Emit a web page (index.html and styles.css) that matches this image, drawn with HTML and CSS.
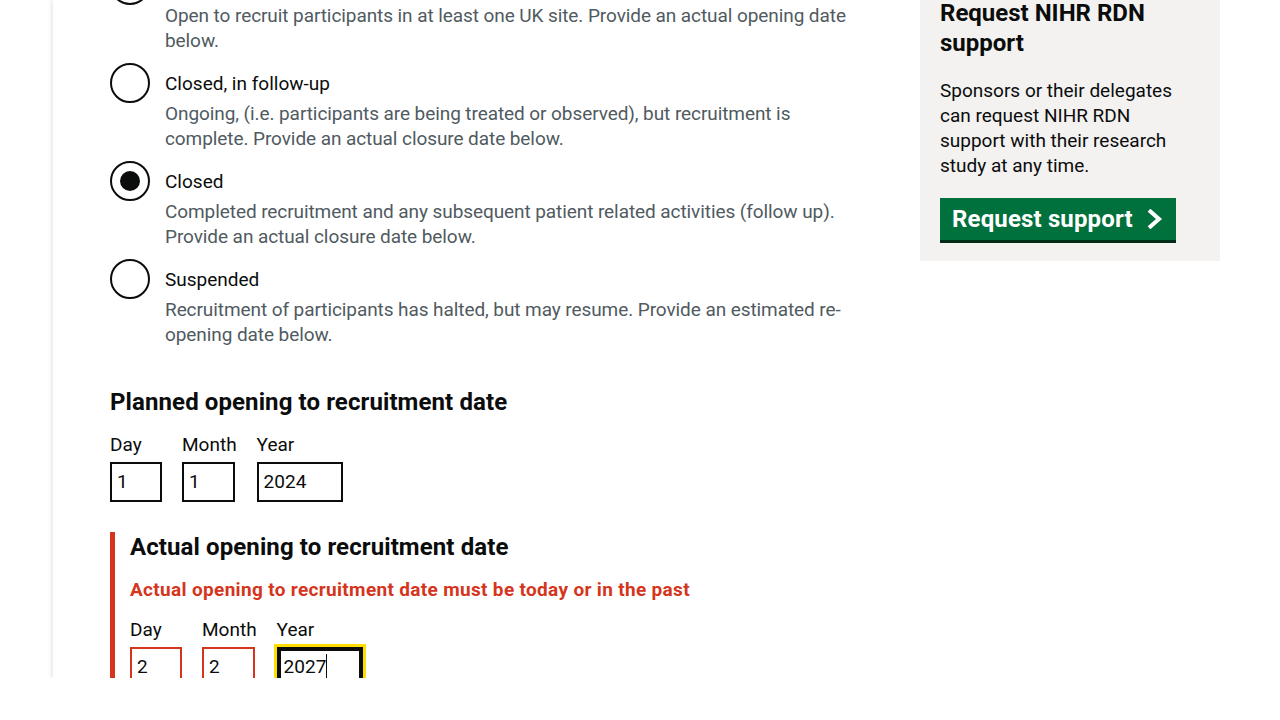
FILE: index.html
```html
<!DOCTYPE html>
<html lang="en">
<head>
<meta charset="utf-8">
<title>Update study status</title>
<link rel="stylesheet" href="styles.css">
</head>
<body>
<div class="frame">
  <div class="layout">
    <main class="main">
      <div class="radios">
        <div class="radio-item">
          <span class="radio"></span>
          <div class="radio-text">
            <div class="radio-label">Open, to recruitment</div>
            <div class="hint">Open to recruit participants in at least one UK site. Provide an actual opening date below.</div>
          </div>
        </div>
        <div class="radio-item">
          <span class="radio"></span>
          <div class="radio-text">
            <div class="radio-label">Closed, in follow-up</div>
            <div class="hint">Ongoing, (i.e. participants are being treated or observed), but recruitment is complete. Provide an actual closure date below.</div>
          </div>
        </div>
        <div class="radio-item">
          <span class="radio radio-checked"></span>
          <div class="radio-text">
            <div class="radio-label">Closed</div>
            <div class="hint">Completed recruitment and any subsequent patient related activities (follow up). Provide an actual closure date below.</div>
          </div>
        </div>
        <div class="radio-item">
          <span class="radio"></span>
          <div class="radio-text">
            <div class="radio-label">Suspended</div>
            <div class="hint">Recruitment of participants has halted, but may resume. Provide an estimated re-opening date below.</div>
          </div>
        </div>
      </div>

      <section class="date-group">
        <h2 class="group-heading">Planned opening to recruitment date</h2>
        <div class="date-inputs">
          <div class="date-item">
            <div class="date-label">Day</div>
            <div class="input input-day">1</div>
          </div>
          <div class="date-item">
            <div class="date-label">Month</div>
            <div class="input input-month">1</div>
          </div>
          <div class="date-item">
            <div class="date-label">Year</div>
            <div class="input input-year">2024</div>
          </div>
        </div>
      </section>

      <section class="date-group date-group-error">
        <h2 class="group-heading">Actual opening to recruitment date</h2>
        <p class="error-message">Actual opening to recruitment date must be today or in the past</p>
        <div class="date-inputs">
          <div class="date-item">
            <div class="date-label">Day</div>
            <div class="input input-day input-error">2</div>
          </div>
          <div class="date-item">
            <div class="date-label">Month</div>
            <div class="input input-month input-error">2</div>
          </div>
          <div class="date-item">
            <div class="date-label">Year</div>
            <div class="input input-year input-focus">2027<span class="caret"></span></div>
          </div>
        </div>
      </section>
    </main>

    <aside class="sidebar">
      <h2 class="sidebar-heading">Request NIHR RDN support</h2>
      <p class="sidebar-text">Sponsors or their delegates can request NIHR RDN support with their research study at any time.</p>
      <a class="button" href="#">Request support
        <svg class="chevron" width="16" height="20" viewBox="0 0 16 20" aria-hidden="true"><polyline points="3.5,2.5 12,10 3.5,17.5" fill="none" stroke="#ffffff" stroke-width="4" stroke-linecap="square" stroke-linejoin="miter"/></svg>
      </a>
    </aside>
  </div>
</div>
</body>
</html>
```

FILE: styles.css
```css
* { box-sizing: border-box; }

html, body {
  margin: 0;
  padding: 0;
  background: #ffffff;
}

body {
  font-family: Roboto, "Noto Sans", Arial, sans-serif;
  color: #0b0c0c;
  font-size: 19px;
  line-height: 25px;
}

.frame {
  margin-left: 53px;
  height: 678px;
  overflow: hidden;
  background: #ffffff;
  box-shadow: -1px 0 5px rgba(0, 0, 0, 0.12);
  padding-left: 57px;
}

.layout {
  margin-top: -35px;
  display: grid;
  grid-template-columns: 750px 300px;
  column-gap: 60px;
  align-items: start;
}

/* Radios */
.radios {
  margin-bottom: 40px;
}

.radio-item {
  display: flex;
  margin-bottom: 10px;
}

.radio-item:last-child {
  margin-bottom: 0;
}

.radio {
  flex: 0 0 40px;
  width: 40px;
  height: 40px;
  border: 2px solid #0b0c0c;
  border-radius: 50%;
  display: flex;
  align-items: center;
  justify-content: center;
  background: #ffffff;
}

.radio-checked::after {
  content: "";
  width: 20px;
  height: 20px;
  border-radius: 50%;
  background: #0b0c0c;
}

.radio-text {
  padding-left: 15px;
}

.radio-label {
  padding-top: 8px;
  padding-bottom: 5px;
  font-size: 19px;
  line-height: 25px;
  color: #0b0c0c;
}

.hint {
  font-size: 19px;
  line-height: 25px;
  color: #505a5f;
  letter-spacing: -0.08px;
}

/* Date groups */
.group-heading {
  margin: 0 0 15px;
  font-size: 24px;
  line-height: 30px;
  font-weight: 700;
  letter-spacing: 0.1px;
}

.date-group-error {
  margin-top: 30px;
  border-left: 5px solid #d4351c;
  padding-left: 15px;
  padding-bottom: 20px;
}

.error-message {
  margin: 0 0 15px;
  color: #d4351c;
  font-weight: 700;
  font-size: 19px;
  line-height: 25px;
  letter-spacing: 0.33px;
}

.date-inputs {
  display: flex;
  column-gap: 20px;
}

.date-item {
  display: flex;
  flex-direction: column;
}

.date-label {
  margin-bottom: 5px;
  font-size: 19px;
  line-height: 25px;
}

.input {
  height: 40px;
  border: 2px solid #0b0c0c;
  padding: 0 5px;
  font-size: 19px;
  line-height: 36px;
  background: #ffffff;
  white-space: nowrap;
}

.input-day { width: 52px; }
.input-month { width: 53px; }
.input-year { width: 86px; }

.input-error {
  border-color: #d4351c;
}

.input-focus {
  border-color: #0b0c0c;
  box-shadow: inset 0 0 0 2px #0b0c0c;
  outline: 3px solid #ffdd00;
  outline-offset: 0;
}

.caret {
  display: inline-block;
  width: 1px;
  height: 24px;
  background: #0b0c0c;
  vertical-align: -5px;
}

/* Sidebar */
.sidebar {
  margin-top: 13px;
  background: #f3f2f1;
  padding: 20px 20px 18px;
}

.sidebar-heading {
  margin: 0 0 20px;
  font-size: 24px;
  line-height: 30px;
  font-weight: 700;
}

.sidebar-text {
  margin: 0 0 20px;
  font-size: 19px;
  line-height: 25px;
}

.button {
  display: inline-flex;
  align-items: center;
  column-gap: 14px;
  background: #00703c;
  color: #ffffff;
  text-decoration: none;
  font-size: 24px;
  line-height: 30px;
  font-weight: 700;
  letter-spacing: 0.15px;
  padding: 6px 13px 6px 12px;
  box-shadow: 0 3px 0 #002d18;
  margin-bottom: 3px;
}

.chevron {
  display: block;
}
```
